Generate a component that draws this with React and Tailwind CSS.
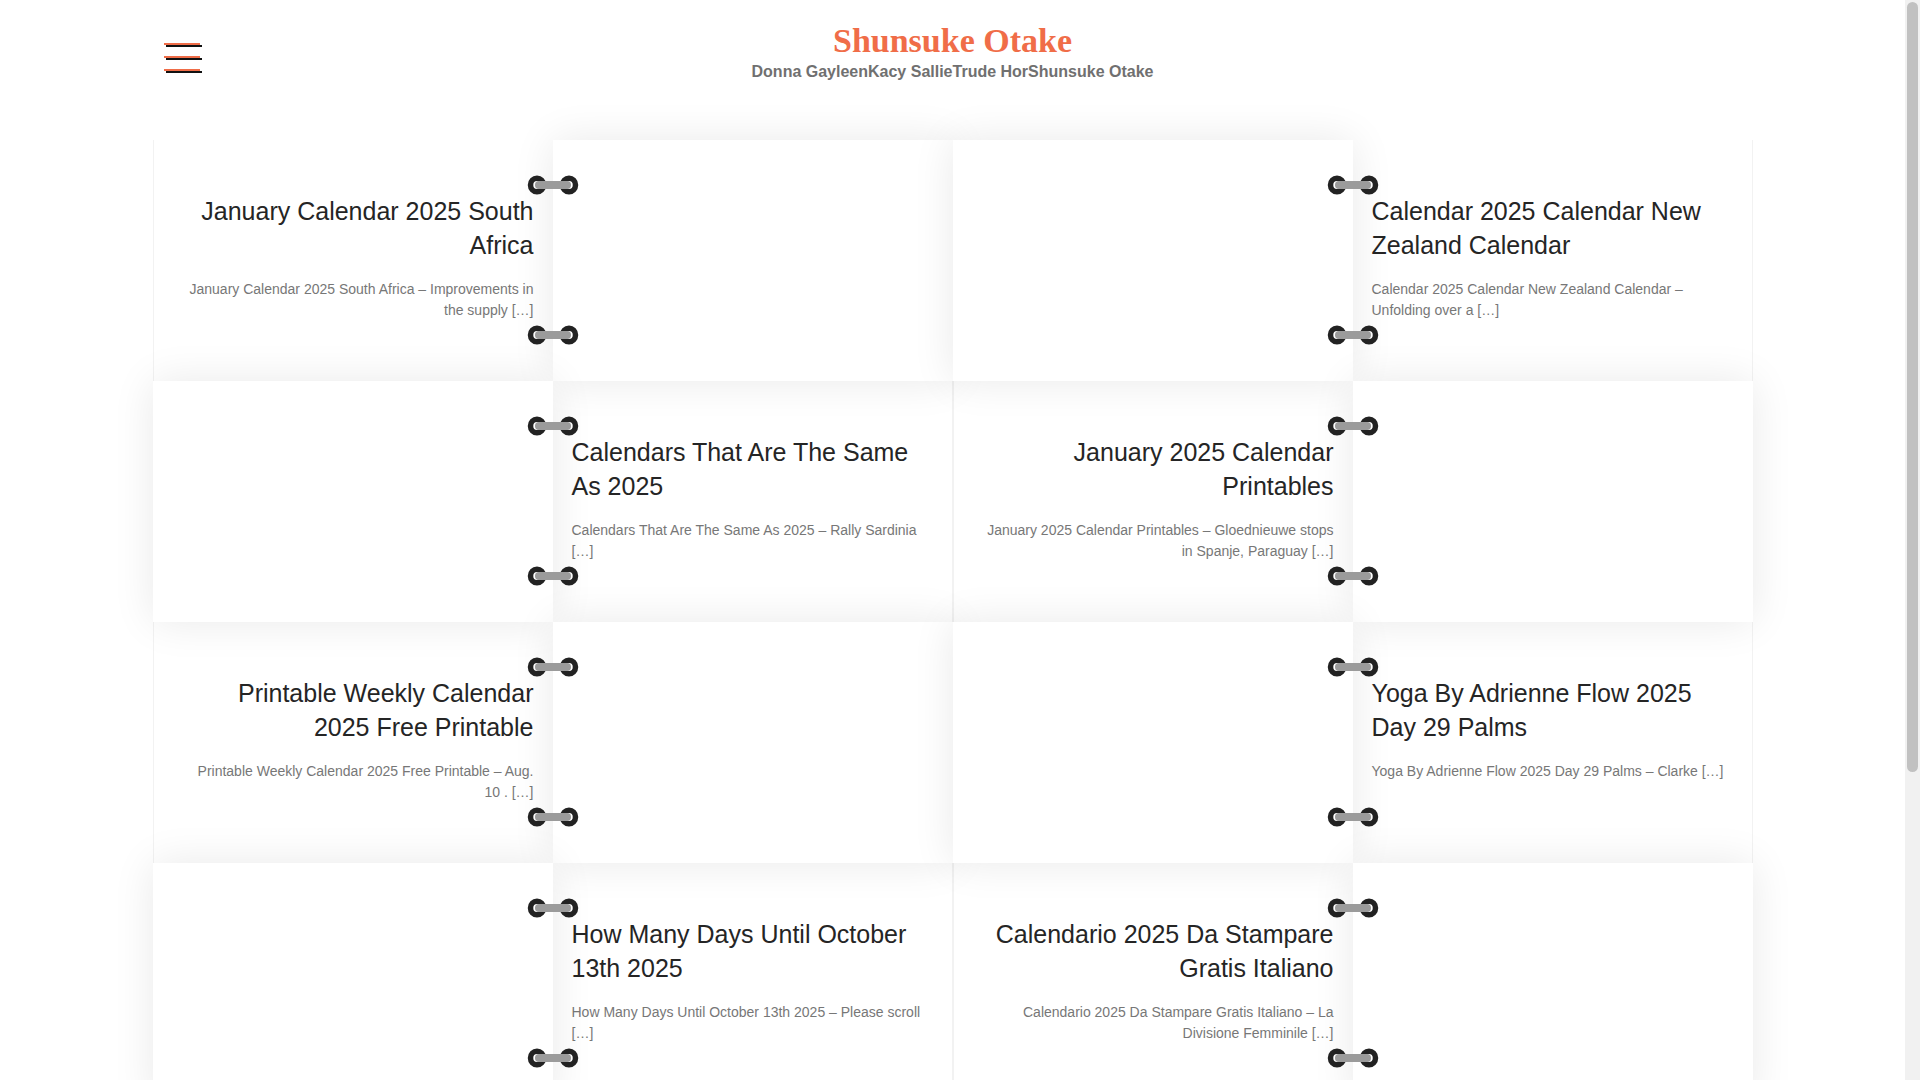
import React from 'react';

const posts = [
  {
    title: 'January Calendar 2025 South Africa',
    excerpt: 'January Calendar 2025 South Africa – Improvements in the supply […]',
  },
  {
    title: 'Calendar 2025 Calendar New Zealand Calendar',
    excerpt: 'Calendar 2025 Calendar New Zealand Calendar – Unfolding over a […]',
  },
  {
    title: 'Calendars That Are The Same As 2025',
    excerpt: 'Calendars That Are The Same As 2025 – Rally Sardinia […]',
  },
  {
    title: 'January 2025 Calendar Printables',
    excerpt: 'January 2025 Calendar Printables – Gloednieuwe stops in Spanje, Paraguay […]',
  },
  {
    title: 'Printable Weekly Calendar 2025 Free Printable',
    excerpt: 'Printable Weekly Calendar 2025 Free Printable – Aug. 10 . […]',
  },
  {
    title: 'Yoga By Adrienne Flow 2025 Day 29 Palms',
    excerpt: 'Yoga By Adrienne Flow 2025 Day 29 Palms – Clarke […]',
  },
  {
    title: 'How Many Days Until October 13th 2025',
    excerpt: 'How Many Days Until October 13th 2025 – Please scroll […]',
  },
  {
    title: 'Calendario 2025 Da Stampare Gratis Italiano',
    excerpt: 'Calendario 2025 Da Stampare Gratis Italiano – La Divisione Femminile […]',
  },
];

const nav = ['Donna Gayleen', 'Kacy Sallie', 'Trude Hor', 'Shunsuke Otake'];

function Ring({ className }) {
  return (
    <svg width="52" height="20" viewBox="0 0 52 20" className={`absolute z-20 ${className}`}>
      <ellipse cx="10" cy="10" rx="6.5" ry="6.8" fill="none" stroke="#222" strokeWidth="5.5" />
      <ellipse cx="42" cy="10" rx="6.5" ry="6.8" fill="none" stroke="#222" strokeWidth="5.5" />
      <rect x="8" y="6" width="36" height="8" rx="4" fill="#9b9b9b" />
    </svg>
  );
}

function TextCell({ post, side }) {
  // side 'right': spine on the right, text right-aligned
  const right = side === 'right';
  return (
    <div
      className={`relative h-[241px] bg-white border-[#f2f2f2] ${
        right ? 'border-l pl-[28px] pr-[19px] text-right' : 'border-r pl-[19px] pr-[28px] text-left'
      } pt-[54px]`}
    >
      <h2 className="text-[25px] leading-[34px] text-[#252525] font-normal">{post.title}</h2>
      <p className="mt-[17px] text-[14px] leading-[21px] text-[#777]">{post.excerpt}</p>
      <Ring className={right ? 'top-[35px] -right-[26px]' : 'top-[35px] -left-[26px]'} />
      <Ring className={right ? 'bottom-[36px] -right-[26px]' : 'bottom-[36px] -left-[26px]'} />
    </div>
  );
}

function ImageCell() {
  return <div className="relative z-10 h-[241px] bg-white shadow-[0_0_40px_rgba(0,0,0,0.09)]" />;
}

export default function App() {
  const rows = [0, 1, 2, 3].map((r) => {
    const a = posts[r * 2];
    const b = posts[r * 2 + 1];
    if (r % 2 === 0) {
      return [
        <TextCell key="a" post={a} side="right" />,
        <ImageCell key="ai" />,
        <ImageCell key="bi" />,
        <TextCell key="b" post={b} side="left" />,
      ];
    }
    return [
      <ImageCell key="ai" />,
      <TextCell key="a" post={a} side="left" />,
      <TextCell key="b" post={b} side="right" />,
      <ImageCell key="bi" />,
    ];
  });

  return (
    <div className="flex h-screen overflow-hidden bg-white font-['Liberation_Sans',Arial,sans-serif]">
      <div className="min-w-0 flex-1">
        <header className="mx-auto grid h-[140px] max-w-[1600px] grid-cols-[1fr_auto_1fr] content-start pt-[20px]">
          <button className="ml-[11px] mt-[23px] flex w-[38px] flex-col gap-[11px]">
            <span className="block h-[2px] w-[36px] bg-[#f06d48] shadow-[2px_2px_0_#111]" />
            <span className="block h-[2px] w-[36px] bg-[#f06d48] shadow-[2px_2px_0_#111]" />
            <span className="block h-[2px] w-[36px] bg-[#f06d48] shadow-[2px_2px_0_#111]" />
          </button>
          <div className="text-center">
            <h1 className="font-['Liberation_Serif',serif] text-[34px] font-bold leading-[41px] text-[#f06d48]">
              Shunsuke Otake
            </h1>
            <nav className="mt-[1px] flex justify-center text-[16px] font-bold leading-[20px] text-[#707070]">
              {nav.map((n) => (
                <a key={n} href="#">
                  {n}
                </a>
              ))}
            </nav>
          </div>
          <div />
        </header>

        <main className="mx-auto grid max-w-[1600px] grid-cols-4">{rows}</main>
      </div>

      {/* page scrollbar */}
      <div className="flex w-[15px] shrink-0 flex-col bg-[#f1f1f1] px-[2px] pt-[2px]">
        <div className="h-[770px] w-full rounded-[6px] bg-[#c1c1c1]" />
      </div>
    </div>
  );
}
